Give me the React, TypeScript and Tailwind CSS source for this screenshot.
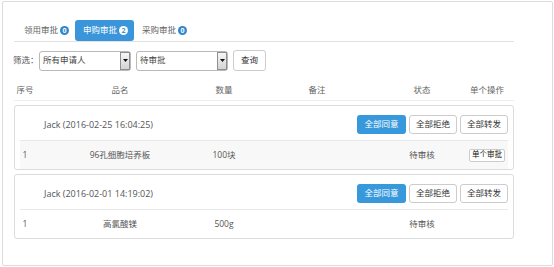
import React from 'react';

const FONT = { fontFamily: '"Open Sans", "Noto Sans CJK SC", sans-serif' };

const COLS = 'grid grid-cols-[10px_180px_28px_158px_52px_78px] items-center';
const CELL = 'flex justify-center whitespace-nowrap';

interface Tab {
  label: string;
  count: number;
  active?: boolean;
}

const TABS: Tab[] = [
  { label: '领用审批', count: 0 },
  { label: '申购审批', count: 2, active: true },
  { label: '采购审批', count: 0 },
];

interface Group {
  who: string;
  items: Array<{ no: string; name: string; qty: string; note: string; status: string }>;
  shaded?: boolean;
  single?: boolean;
}

const GROUPS: Group[] = [
  {
    who: 'Jack (2016-02-25 16:04:25)',
    items: [{ no: '1', name: '96孔细胞培养板', qty: '100块', note: '', status: '待审核' }],
    shaded: true,
    single: true,
  },
  {
    who: 'Jack (2016-02-01 14:19:02)',
    items: [{ no: '1', name: '高氯酸镁', qty: '500g', note: '', status: '待审核' }],
  },
];

const Select = ({ value }: { value: string }) => (
  <div className="flex h-[20px] w-[92px] items-stretch rounded-[3px] border border-[#b9b9b9] bg-white">
    <span className="flex flex-1 items-center whitespace-nowrap pl-[3px] text-[#444]">{value}</span>
    <span className="flex w-[10px] items-center justify-center border border-[#8f8f8f] bg-gradient-to-b from-[#f7f7f7] to-[#d4d4d4]">
      <svg width="5" height="3" viewBox="0 0 5 3">
        <path d="M0 0h5L2.5 3z" fill="#111" />
      </svg>
    </span>
  </div>
);

const HeadButtons = () => (
  <div className="flex gap-[3px] whitespace-nowrap">
    <button className="h-[19px] w-[49px] rounded-[3px] bg-[#3898dc] text-white">全部同意</button>
    <button className="h-[19px] w-[48px] rounded-[3px] border border-[#ccc] bg-white text-[#333]">全部拒绝</button>
    <button className="h-[19px] w-[48px] rounded-[3px] border border-[#ccc] bg-white text-[#333]">全部转发</button>
  </div>
);

export default function App() {
  return (
    <div className="h-[267px] w-[554px] bg-white text-[8.5px] leading-none text-[#555]" style={FONT}>
      <div className="ml-[2px] mt-[1px] h-[265px] w-[551px] rounded-[2px] border border-[#dcdcdc] pl-[11px] pt-[18px]">
        <div className="w-[500px]">
          {/* tabs */}
          <div className="flex h-[22px] items-end border-b border-[#e2e2e2] pl-[2px]">
            {TABS.map((t) => (
              <div
                key={t.label}
                className={
                  t.active
                    ? 'flex h-[21px] items-center gap-[2px] whitespace-nowrap rounded-[3px] bg-[#3a95da] pl-[8px] pr-[6px] text-white'
                    : 'flex h-[21px] items-center gap-[2px] whitespace-nowrap pl-[8px] pr-[6px] text-[#666]'
                }
              >
                <span>{t.label}</span>
                <span
                  className={
                    t.active
                      ? 'flex h-[9px] w-[9px] items-center justify-center rounded-full bg-white text-[7px] font-bold text-[#3a95da]'
                      : 'flex h-[9px] w-[9px] items-center justify-center rounded-full bg-[#2f86cc] text-[7px] font-bold text-white'
                  }
                >
                  {t.count}
                </span>
              </div>
            ))}
          </div>

          {/* filter */}
          <div className="mt-[8px] flex h-[21px] items-center">
            <span className="-ml-[1px] w-[26px] whitespace-nowrap text-[#555]">筛选：</span>
            <Select value="所有申请人" />
            <div className="ml-[5px]">
              <Select value="待审批" />
            </div>
            <button className="ml-[5px] h-[21px] w-[33px] whitespace-nowrap rounded-[3px] border border-[#ccc] bg-white text-[#333]">
              查询
            </button>
          </div>

          {/* header */}
          <div className={`${COLS} mt-[9px] h-[21px] border-b border-[#eee] px-[6px] text-[#666]`}>
            <span className={CELL}>序号</span>
            <span className={CELL}>品名</span>
            <span className={CELL}>数量</span>
            <span className={CELL}>备注</span>
            <span className={CELL}>状态</span>
            <span className={CELL}>单个操作</span>
          </div>

          {GROUPS.map((g) => (
            <div key={g.who} className="mt-[4px] rounded-[3px] border border-[#dcdcdc]">
              <div className="flex h-[34px] items-center justify-between pl-[29px] pr-[5px] pt-[3px]">
                <span className="whitespace-nowrap text-[9px] text-[#555]">{g.who}</span>
                <HeadButtons />
              </div>
              {g.items.map((it) => (
                <div
                  key={it.name}
                  className={
                    g.shaded
                      ? `${COLS} mx-[5px] h-[29px] border-t border-[#e8e8e8] bg-[#f8f8f8]`
                      : `${COLS} mx-[5px] h-[29px] border-t border-[#e8e8e8]`
                  }
                >
                  <span className={CELL}>{it.no}</span>
                  <span className={CELL}>{it.name}</span>
                  <span className={CELL}>{it.qty}</span>
                  <span className={CELL}>{it.note}</span>
                  <span className={CELL}>{it.status}</span>
                  <span className={CELL}>
                    {g.single && (
                      <button className="flex h-[13px] w-[36px] items-center justify-center whitespace-nowrap rounded-[2px] border border-[#ccc] bg-white text-[7.5px] text-[#111]">
                        单个审批
                      </button>
                    )}
                  </span>
                </div>
              ))}
            </div>
          ))}
        </div>
      </div>
    </div>
  );
}
